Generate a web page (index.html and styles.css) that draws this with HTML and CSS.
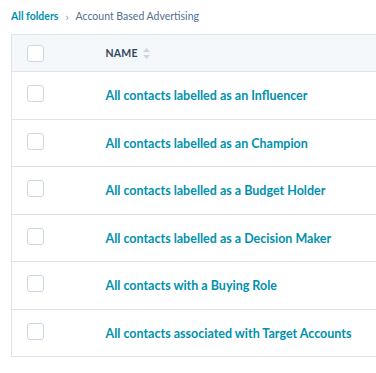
FILE: index.html
```html
<!DOCTYPE html>
<html lang="en">
<head>
    <meta charset="UTF-8">
    <title>Account Based Advertising</title>
    <link rel="stylesheet" href="styles.css">
</head>
<body>
    <nav class="breadcrumb">
        <a href="#" class="crumb-link">All folders</a>
        <span class="crumb-sep">&#8250;</span>
        <span class="crumb-current">Account Based Advertising</span>
    </nav>
    <table class="lists">
        <thead>
            <tr>
                <th class="col-check"><span class="checkbox"></span></th>
                <th class="col-name">
                    <span class="sort-label">NAME</span>
                    <svg class="sort-icon" width="7" height="11" viewBox="0 0 7 11">
                        <path d="M3.5 0 L7 4 L0 4 Z" fill="#cbd6e2"/>
                        <path d="M0 7 L7 7 L3.5 11 Z" fill="#cbd6e2"/>
                    </svg>
                </th>
            </tr>
        </thead>
        <tbody>
            <tr>
                <td class="col-check"><span class="checkbox"></span></td>
                <td class="col-name"><a href="#">All contacts labelled as an Influencer</a></td>
            </tr>
            <tr>
                <td class="col-check"><span class="checkbox"></span></td>
                <td class="col-name"><a href="#">All contacts labelled as an Champion</a></td>
            </tr>
            <tr>
                <td class="col-check"><span class="checkbox"></span></td>
                <td class="col-name"><a href="#">All contacts labelled as a Budget Holder</a></td>
            </tr>
            <tr>
                <td class="col-check"><span class="checkbox"></span></td>
                <td class="col-name"><a href="#">All contacts labelled as a Decision Maker</a></td>
            </tr>
            <tr>
                <td class="col-check"><span class="checkbox"></span></td>
                <td class="col-name"><a href="#">All contacts with a Buying Role</a></td>
            </tr>
            <tr>
                <td class="col-check"><span class="checkbox"></span></td>
                <td class="col-name"><a href="#">All contacts associated with Target Accounts</a></td>
            </tr>
        </tbody>
    </table>
</body>
</html>
```

FILE: styles.css
```css
:root {
    --link-color: #0091ae;
    --text-color: #33475b;
    --border-color: #dfe3eb;
    --header-bg: #f5f8fa;
}

* {
    margin: 0;
    padding: 0;
    box-sizing: border-box;
}

body {
    font-family: 'Lato', 'Open Sans', sans-serif;
    color: var(--text-color);
    background: white;
    padding: 0 0 0 11px;
    overflow: hidden;
}

.breadcrumb {
    display: flex;
    align-items: center;
    height: 34px;
    font-size: 10.5px;
    padding-bottom: 2px;
}

.crumb-link {
    color: var(--link-color);
    font-weight: 700;
    text-decoration: none;
}

.crumb-sep {
    color: #7c98b6;
    margin: 0 7px 0 7px;
    font-size: 11px;
}

.crumb-current {
    color: #516f90;
}

.lists {
    width: 100%;
    border-collapse: collapse;
    border-left: 1px solid var(--border-color);
}

.lists tr {
    border-top: 1px solid var(--border-color);
    border-bottom: 1px solid var(--border-color);
}

.lists th {
    height: 37px;
    background: var(--header-bg);
    text-align: left;
    font-size: 10.5px;
    font-weight: 700;
    letter-spacing: 0.2px;
}

.lists td {
    height: 47.5px;
    padding-bottom: 3px;
}

.col-check {
    width: 94px;
    padding-left: 15px;
}

.checkbox {
    display: block;
    width: 17px;
    height: 17px;
    border: 1px solid #cbd6e2;
    border-radius: 3px;
    background: white;
}

.col-name a {
    color: var(--link-color);
    text-decoration: none;
    font-size: 12.5px;
    font-weight: 700;
}

.sort-label {
    vertical-align: middle;
}

.sort-icon {
    vertical-align: middle;
    margin-left: 3px;
}
```
